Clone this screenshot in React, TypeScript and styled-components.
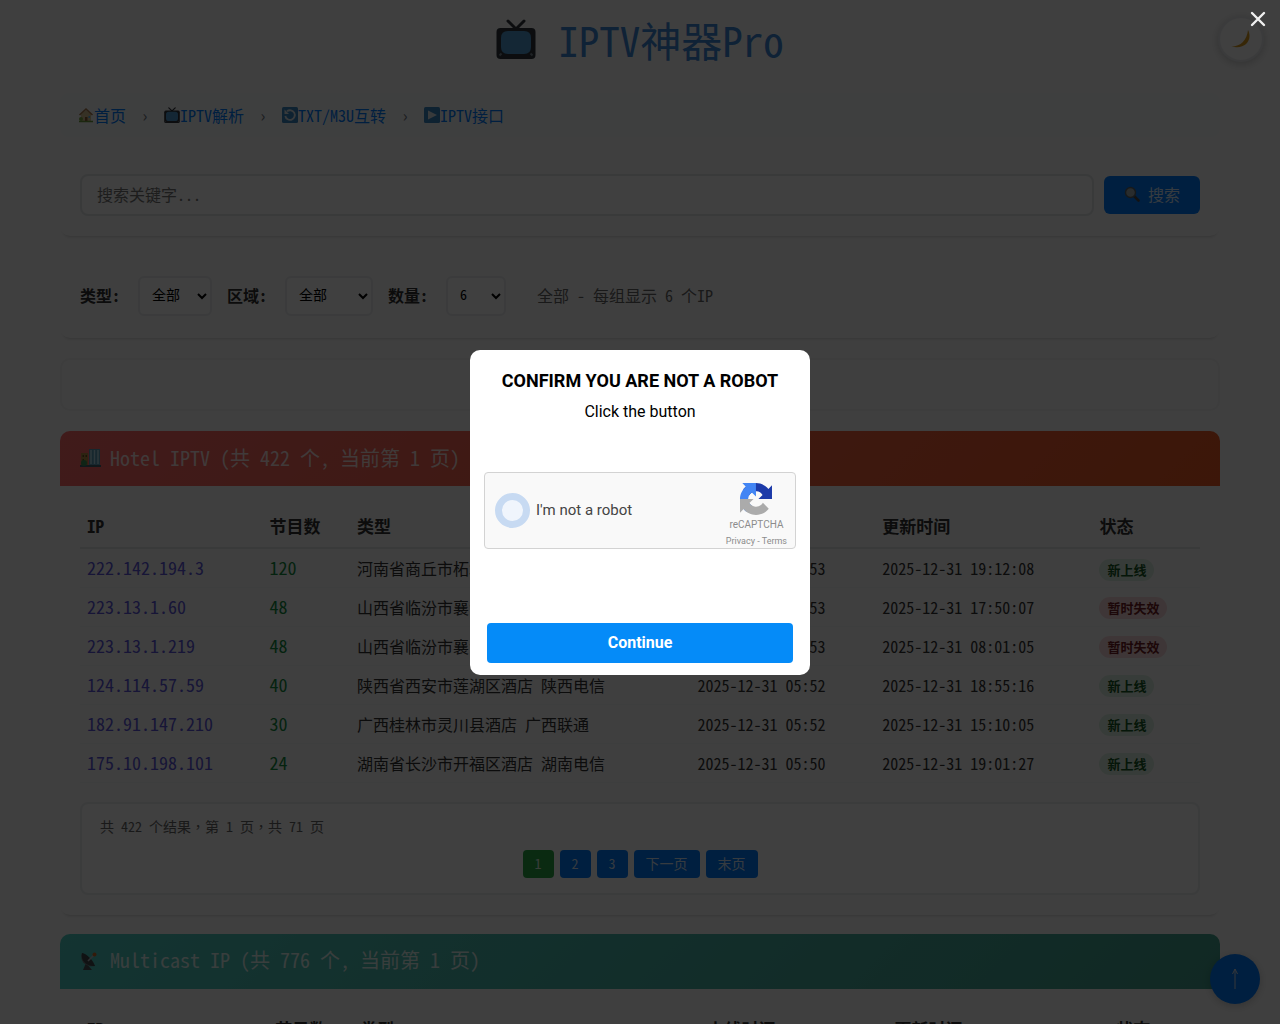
import React from "react";
import styled, { createGlobalStyle } from "styled-components";

const SONG = `"Noto Sans Mono CJK SC", "Noto Sans CJK SC", monospace`;

const GlobalStyle = createGlobalStyle`
  *, *::before, *::after { box-sizing: border-box; }
  body {
    margin: 0;
    background: #fbfbfb;
    color: #333;
    font-family: ${SONG};
    font-size: 16px;
    font-weight: 300;
    line-height: 24px;
    overflow: hidden;
  }
  button, input, select { font: inherit; color: inherit; margin: 0; }
`;

const Page = styled.div`
  height: 100vh;
  overflow: hidden;
`;
const Container = styled.main`
  max-width: 1200px;
  margin: 0 auto;
  padding: 9px 20px 0;
`;
const Title = styled.h1`
  display: flex;
  align-items: center;
  justify-content: center;
  gap: 22px;
  margin: 0 0 24px;
  font-size: 41px;
  line-height: 60px;
  font-weight: 300;
  color: #3f86d6;
`;
const Crumbs = styled.nav`
  display: flex;
  align-items: center;
  gap: 15px;
  padding: 10px 18px;
  margin-bottom: 17px;
  border-radius: 8px;
  background: #f8f9fa;
`;
const Crumb = styled.a`
  display: flex;
  align-items: center;
  color: #007bff;
  font-weight: 300;
  text-decoration: none;
`;
const Separator = styled.span`
  width: 8px;
  text-align: center;
  color: #6c757d;
`;
const Card = styled.section`
  display: flex;
  align-items: center;
  padding: 20px;
  margin-bottom: 21px;
  border-radius: 10px;
  box-shadow: 0 4px 3px -3px rgba(0, 0, 0, 0.16);
`;
const SearchInput = styled.input`
  flex: 1;
  min-width: 0;
  height: 42px;
  padding: 0 15px 2px;
  margin-right: 10px;
  border: 2px solid #e3e5e8;
  border-radius: 8px;
  background: #fdfdfd;
  &::placeholder { color: #757575; opacity: 1; }
`;
const SearchButton = styled.button`
  display: flex;
  align-items: center;
  gap: 8px;
  height: 38px;
  padding: 0 20px 2px;
  border: 0;
  border-radius: 6px;
  background: #007bff;
  color: rgba(255, 255, 255, 0.85);
`;
const Filters = styled(Card)`
  padding: 19px 20px 22px;
  margin-bottom: 20px;
`;
const FilterLabel = styled.label`
  padding-bottom: 2px;
  margin-right: 18px;
  font-weight: 700;
`;
const FilterSelect = styled.select<{ $width: number }>`
  width: ${(p) => p.$width}px;
  height: 40px;
  padding: 0 0 4px 8px;
  margin-right: 15px;
  border: 2px solid #e9ebed;
  border-radius: 6px;
  background: #fdfdfd;
  color: #000;
  font-size: 14px;
  font-weight: 300;
`;
const FilterNote = styled.span`
  padding-bottom: 2px;
  margin-left: 16px;
  color: #666;
`;
const Notice = styled.div`
  height: 53px;
  margin-bottom: 20px;
  border: 2px solid #f1f2f3;
  border-radius: 10px;
`;
const Group = styled.section`
  margin-bottom: 19px;
  border-radius: 10px;
  box-shadow: 0 4px 3px -3px rgba(0, 0, 0, 0.16);
`;
const GroupTitle = styled.h2<{ $from: string; $to: string }>`
  display: flex;
  align-items: center;
  gap: 9px;
  height: 55px;
  margin: 0;
  padding: 0 20px 2px;
  border-radius: 10px 10px 0 0;
  background: linear-gradient(135deg, ${(p) => p.$from}, ${(p) => p.$to});
  color: rgba(255, 255, 255, 0.85);
  font-size: 20px;
  font-weight: 300;
  white-space: pre;
`;
const GroupBody = styled.div`
  padding: 17px 20px 20px;
`;
const Table = styled.table`
  width: 100%;
  margin-bottom: 19px;
  border-collapse: collapse;
  table-layout: fixed;
`;
const HeadCell = styled.th<{ $share: number }>`
  width: ${(p) => p.$share}%;
  height: 45px;
  padding: 2px 7px 0;
  border-bottom: 2px solid #e3e5e8;
  background: #f9fafa;
  color: #333;
  font-size: 17px;
  font-weight: 700;
  text-align: left;
`;
const Cell = styled.td`
  height: 39px;
  padding: 0 7px;
  border-bottom: 1px solid #f4f5f6;
  white-space: nowrap;
`;
const IpLink = styled.a`
  color: #5b56da;
  font-size: 18px;
  font-weight: 400;
  text-decoration: none;
`;
const Count = styled.span`
  color: #138a3e;
  font-size: 18px;
  font-weight: 500;
`;
const Status = styled.span<{ $ok: boolean }>`
  display: inline-block;
  padding: 0 8px;
  border-radius: 12px;
  background: ${(p) => (p.$ok ? "#dcefe1" : "#f8d7da")};
  color: ${(p) => (p.$ok ? "#155724" : "#721c24")};
  font-size: 13px;
  line-height: 22px;
  font-weight: 700;
  vertical-align: middle;
`;
const Pager = styled.div`
  padding: 10px 18px 15px;
  border: 2px solid #ebedef;
  border-radius: 8px;
  background: #fdfdfd;
`;
const PagerInfo = styled.p`
  margin: 0 0 12px;
  color: #666;
  font-family: "Noto Sans Mono CJK TC", "Noto Sans CJK TC", monospace;
  font-size: 14px;
`;
const PagerButtons = styled.div`
  display: flex;
  justify-content: center;
  gap: 6px;
`;
const PageButton = styled.button<{ $current?: boolean }>`
  height: 28px;
  padding: 0 12px 2px;
  border: 0;
  border-radius: 4px;
  background: ${(p) => (p.$current ? "#28a745" : "#007bff")};
  color: rgba(255, 255, 255, 0.85);
  font-size: 14px;
`;
const RoundButton = styled.button<{ $size: number }>`
  display: flex;
  align-items: center;
  justify-content: center;
  width: ${(p) => p.$size}px;
  height: ${(p) => p.$size}px;
  padding: 0;
  border: 0;
  border-radius: 50%;
  box-shadow: 0 2px 8px rgba(0, 0, 0, 0.2);
`;
const ThemeButton = styled(RoundButton)`
  position: fixed;
  top: 16px;
  right: 16px;
  border: 2px solid #e9ecef;
  background: #fdfdfd;
`;
const TopButton = styled(RoundButton)`
  position: fixed;
  right: 20px;
  bottom: 20px;
  background: #007bff;
  color: #fff;
`;

const Overlay = styled.div`
  position: fixed;
  inset: 0;
  display: flex;
  align-items: center;
  justify-content: center;
  background: rgba(0, 0, 0, 0.75);
  font-family: Roboto, sans-serif;
`;
const CloseButton = styled.button`
  position: absolute;
  top: 8px;
  right: 11px;
  display: flex;
  padding: 0;
  border: 0;
  background: none;
`;
const Dialog = styled.div`
  display: flex;
  flex-direction: column;
  width: 340px;
  padding: 18px 14px 12px;
  border-radius: 10px;
  background: #fff;
  color: #000;
  text-align: center;
  font-weight: 400;
`;
const DialogTitle = styled.h2`
  margin: 0 0 6px;
  font-size: 18px;
  line-height: 26px;
  font-weight: 700;
`;
const DialogText = styled.p`
  margin: 0 0 48px;
  font-size: 16px;
  line-height: 24px;
`;
const Captcha = styled.div`
  display: flex;
  justify-content: space-between;
  height: 77px;
  padding: 0 8px 0 10px;
  margin-bottom: 74px;
  border: 1px solid #d3d3d3;
  border-radius: 4px;
  background: #f9f9f9;
`;
const CaptchaLabel = styled.label`
  display: flex;
  align-items: center;
  gap: 6px;
  color: #444;
  font-size: 15px;
`;
const CaptchaTick = styled.input`
  appearance: none;
  width: 35px;
  height: 35px;
  margin: 0;
  border: 7px solid #c7daf2;
  border-radius: 50%;
  background: #f0f5fc;
`;
const CaptchaBrand = styled.div`
  display: flex;
  flex-direction: column;
  align-items: center;
  gap: 4px;
  padding-top: 10px;
  color: #8c8c8c;
  font-size: 10px;
  line-height: 12px;
`;
const CaptchaName = styled.span`
  white-space: nowrap;
`;
const CaptchaLinks = styled.span`
  font-size: 9px;
`;
const CaptchaLink = styled.a`
  color: inherit;
  text-decoration: none;
`;
const ContinueButton = styled.button`
  height: 40px;
  margin: 0 3px;
  border: 0;
  border-radius: 4px;
  background: #058bf8;
  color: #fff;
  font-size: 16px;
  font-weight: 700;
`;

type IconProps = { size: number };

const TvIcon = ({ size }: IconProps) => (
  <svg width={size} height={size} viewBox="0 0 40 40" aria-hidden="true">
    <path d="M12 2l8 8 8-8" fill="none" stroke="#31373d" strokeWidth="3" strokeLinecap="round" />
    <rect x="0.5" y="9" width="39" height="31" rx="4" fill="#31373d" />
    <path d="M12 12h16q7 0 7 7v9q0 7-7 7H12q-7 0-7-7v-9q0-7 7-7z" fill="#4f9cd4" />
    <path d="M3.500 36.500l2-2m31 2l-2-2" stroke="#7b8a94" strokeWidth="2" />
  </svg>
);
const HouseIcon = ({ size }: IconProps) => (
  <svg width={size} height={size} viewBox="0 0 16 16" aria-hidden="true">
    <path d="M3 7l5-4 5 4v7H3z" fill="#d8c294" />
    <path d="M1.500 8L8 2l6.500 6" fill="none" stroke="#a97c50" strokeWidth="1.600" />
    <path d="M7 10h2.500v4H7z" fill="#8d5a34" />
    <path d="M10.500 9h1.500v2h-1.500z" fill="#5ab0e8" />
    <path d="M1 14.500h14" stroke="#6d9b3c" strokeWidth="1.500" />
    <circle cx="3" cy="12" r="2" fill="#78a844" />
  </svg>
);
const CycleIcon = ({ size }: IconProps) => (
  <svg width={size} height={size} viewBox="0 0 16 16" aria-hidden="true">
    <rect width="16" height="16" rx="1.500" fill="#3b88c3" />
    <path d="M5 4.300A4.800 4.800 0 1 1 3.300 9" fill="none" stroke="#dfe6ec" strokeWidth="1.800" />
    <path d="M2.500 2.500v4.500h4.500z" fill="#dfe6ec" />
  </svg>
);
const PlayIcon = ({ size }: IconProps) => (
  <svg width={size} height={size} viewBox="0 0 16 16" aria-hidden="true">
    <rect width="16" height="16" rx="1.500" fill="#3b88c3" />
    <path d="M4 3.500L13 8l-9 4.500z" fill="#dfe6ec" />
  </svg>
);
const SearchIcon = ({ size }: IconProps) => (
  <svg width={size} height={size} viewBox="0 0 16 16" aria-hidden="true">
    <path d="M10 10l4.500 4.500" stroke="#4a4a4a" strokeWidth="2.600" strokeLinecap="round" />
    <circle cx="6.500" cy="6.500" r="5" fill="#a3afb4" stroke="#5b6468" strokeWidth="1.400" />
  </svg>
);
const HotelIcon = ({ size }: IconProps) => (
  <svg width={size} height={size} viewBox="0 0 21 21" aria-hidden="true">
    <path d="M1 6h7v13H1z" fill="#b58c46" />
    <path d="M2.500 8h1.500v2H2.500zm3 0H7v2H5.500zm-3 4h1.500v2H2.500z" fill="#6a4b23" />
    <path d="M9 2h11v17H9z" fill="#5c9db8" />
    <path d="M11 3v14m3.500-14v14M18 3v14" stroke="#b5dcec" strokeWidth="1.400" />
    <path d="M0 19h21" stroke="#42606e" strokeWidth="2" />
    <circle cx="4" cy="16" r="3" fill="#3f8f57" />
  </svg>
);
const AntennaIcon = ({ size }: IconProps) => (
  <svg width={size} height={size} viewBox="0 0 21 21" aria-hidden="true">
    <path d="M3 20l3-7 6 7z" fill="#4b5257" />
    <path d="M2 3c-3 8 4 15 13 13z" fill="#6d767c" />
    <path d="M2 3c5 1 11 7 13 13-7 1-15-5-13-13z" fill="#40474c" />
    <path d="M8 11l6-6" stroke="#b5bdc2" strokeWidth="1.600" />
    <circle cx="14.500" cy="4.500" r="2" fill="#c96a2b" />
  </svg>
);
const MoonIcon = ({ size }: IconProps) => (
  <svg width={size} height={size} viewBox="0 0 20 20" aria-hidden="true">
    <path d="M17 1c5 10-3 20-16.500 16.500C10 17.500 16 11 17 1z" fill="#d99a1e" />
  </svg>
);
const ArrowUpIcon = ({ size }: IconProps) => (
  <svg width={size} height={size} viewBox="0 0 24 24" aria-hidden="true">
    <path d="M12 2v20M9.500 7L12 2l2.500 5" fill="none" stroke="#d5dde6" strokeWidth="1" />
  </svg>
);
const CloseIcon = ({ size }: IconProps) => (
  <svg width={size} height={size} viewBox="0 0 22 22" aria-hidden="true">
    <path d="M5 5l12 12M17 5L5 17" stroke="#f0f0f0" strokeWidth="2.400" strokeLinecap="round" />
  </svg>
);
const RecaptchaIcon = ({ size }: IconProps) => (
  <svg width={size} height={size} viewBox="0 0 64 64" aria-hidden="true">
    <path
      fill="#1c3aa9"
      d="M64 31.955l-.033-1.370V4.687l-7.160 7.160C50.905 4.674 41.962.093 31.955.093c-10.415 0-19.670 4.960-25.524 12.638l11.736 11.860a15.550 15.550 0 0 1 4.754-5.334c2.050-1.600 4.952-2.906 9.033-2.906.493 0 .873.058 1.153.166 5.056.4 9.440 3.190 12.020 7.240l-8.307 8.307L64 31.955"
    />
    <path
      fill="#4285f4"
      d="M31.862.094l-1.370.033H4.594l7.160 7.160C4.580 13.147 0 22.090 0 32.096c0 10.415 4.960 19.670 12.638 25.524l11.860-11.736a15.550 15.550 0 0 1-5.334-4.754c-1.600-2.050-2.906-4.952-2.906-9.033 0-.493.058-.873.166-1.153.4-5.056 3.190-9.440 7.240-12.020l8.307 8.307L31.862.094"
    />
    <path
      fill="#ababab"
      d="M.001 32.045l.033 1.370v25.898l7.160-7.160c5.860 7.173 14.800 11.754 24.810 11.754 10.415 0 19.670-4.960 25.524-12.638l-11.736-11.860a15.550 15.550 0 0 1-4.754 5.334c-2.050 1.600-4.952 2.906-9.033 2.906-.493 0-.873-.058-1.153-.166-5.056-.4-9.440-3.190-12.020-7.240l8.307-8.307c-10.522.04-22.400.066-27.140.01"
    />
  </svg>
);

const crumbs = [
  { icon: HouseIcon, label: "首页" },
  { icon: TvIcon, label: "IPTV解析" },
  { icon: CycleIcon, label: "TXT/M3U互转" },
  { icon: PlayIcon, label: "IPTV接口" },
];

const filters = [
  { id: "type", label: "类型:", value: "全部", width: 74 },
  { id: "region", label: "区域:", value: "全部", width: 88 },
  { id: "count", label: "数量:", value: "6", width: 60 },
];

const headings = ["IP", "节目数", "类型", "上线时间", "更新时间", "状态"];
const hotelShares = [16.3, 7.8, 30.4, 16.5, 19.4, 9.6];
const multicastShares = [16.8, 7.6, 31, 16.7, 19.8, 8.1];

const rows = [
  { ip: "222.142.194.3", count: 120, kind: "河南省商丘市柘城县酒店 河南联通", added: "2025-12-31 05:53", updated: "2025-12-31 19:12:08", ok: true },
  { ip: "223.13.1.60", count: 48, kind: "山西省临汾市襄汾县酒店 山西电信", added: "2025-12-31 05:53", updated: "2025-12-31 17:50:07", ok: false },
  { ip: "223.13.1.219", count: 48, kind: "山西省临汾市襄汾县酒店 山西电信", added: "2025-12-31 05:53", updated: "2025-12-31 08:01:05", ok: false },
  { ip: "124.114.57.59", count: 40, kind: "陕西省西安市莲湖区酒店 陕西电信", added: "2025-12-31 05:52", updated: "2025-12-31 18:55:16", ok: true },
  { ip: "182.91.147.210", count: 30, kind: "广西桂林市灵川县酒店 广西联通", added: "2025-12-31 05:52", updated: "2025-12-31 15:10:05", ok: true },
  { ip: "175.10.198.101", count: 24, kind: "湖南省长沙市开福区酒店 湖南电信", added: "2025-12-31 05:50", updated: "2025-12-31 19:01:27", ok: true },
];

const TableHead = ({ shares }: { shares: number[] }) => (
  <thead>
    <tr>
      {headings.map((heading, i) => (
        <HeadCell key={heading} $share={shares[i]}>{heading}</HeadCell>
      ))}
    </tr>
  </thead>
);

export default function App() {
  return (
    <>
      <GlobalStyle />
      <Page>
        <Container>
          <Title><TvIcon size={40} />IPTV神器Pro</Title>
          <Crumbs>
            {crumbs.map(({ icon: Icon, label }, i) => (
              <React.Fragment key={label}>
                {i > 0 && <Separator>›</Separator>}
                <Crumb href="#"><Icon size={16} />{label}</Crumb>
              </React.Fragment>
            ))}
          </Crumbs>
          <Card>
            <SearchInput type="text" placeholder="搜索关键字..." aria-label="搜索关键字" />
            <SearchButton type="button"><SearchIcon size={16} />搜索</SearchButton>
          </Card>
          <Filters>
            {filters.map((f) => (
              <React.Fragment key={f.id}>
                <FilterLabel htmlFor={f.id}>{f.label}</FilterLabel>
                <FilterSelect id={f.id} $width={f.width}><option>{f.value}</option></FilterSelect>
              </React.Fragment>
            ))}
            <FilterNote>全部 - 每组显示 6 个IP</FilterNote>
          </Filters>
          <Notice />
          <Group>
            <GroupTitle $from="#ff6b6b" $to="#ee5a24"><HotelIcon size={21} />Hotel IPTV (共 422 个, 当前第 1 页)</GroupTitle>
            <GroupBody>
              <Table>
                <TableHead shares={hotelShares} />
                <tbody>
                  {rows.map((row) => (
                    <tr key={row.ip}>
                      <Cell><IpLink href="#">{row.ip}</IpLink></Cell>
                      <Cell><Count>{row.count}</Count></Cell>
                      <Cell>{row.kind}</Cell>
                      <Cell>{row.added}</Cell>
                      <Cell>{row.updated}</Cell>
                      <Cell><Status $ok={row.ok}>{row.ok ? "新上线" : "暂时失效"}</Status></Cell>
                    </tr>
                  ))}
                </tbody>
              </Table>
              <Pager>
                <PagerInfo>共 422 个结果，第 1 页，共 71 页</PagerInfo>
                <PagerButtons>
                  <PageButton type="button" $current>1</PageButton>
                  <PageButton type="button">2</PageButton>
                  <PageButton type="button">3</PageButton>
                  <PageButton type="button">下一页</PageButton>
                  <PageButton type="button">末页</PageButton>
                </PagerButtons>
              </Pager>
            </GroupBody>
          </Group>
          <Group>
            <GroupTitle $from="#4ecdc4" $to="#44a08d"><AntennaIcon size={21} />Multicast IP (共 776 个, 当前第 1 页)</GroupTitle>
            <GroupBody>
              <Table><TableHead shares={multicastShares} /></Table>
            </GroupBody>
          </Group>
        </Container>
        <ThemeButton type="button" $size={46} aria-label="切换主题"><MoonIcon size={20} /></ThemeButton>
        <TopButton type="button" $size={50} aria-label="返回顶部"><ArrowUpIcon size={24} /></TopButton>
      </Page>
      <Overlay>
        <CloseButton type="button" aria-label="Close"><CloseIcon size={22} /></CloseButton>
        <Dialog role="dialog" aria-modal="true" aria-labelledby="confirm-title">
          <DialogTitle id="confirm-title">CONFIRM YOU ARE NOT A ROBOT</DialogTitle>
          <DialogText>Click the button</DialogText>
          <Captcha>
            <CaptchaLabel><CaptchaTick type="checkbox" />I'm not a robot</CaptchaLabel>
            <CaptchaBrand>
              <RecaptchaIcon size={32} />
              <CaptchaName>reCAPTCHA</CaptchaName>
              <CaptchaLinks><CaptchaLink href="#">Privacy</CaptchaLink> - <CaptchaLink href="#">Terms</CaptchaLink></CaptchaLinks>
            </CaptchaBrand>
          </Captcha>
          <ContinueButton type="button">Continue</ContinueButton>
        </Dialog>
      </Overlay>
    </>
  );
}
